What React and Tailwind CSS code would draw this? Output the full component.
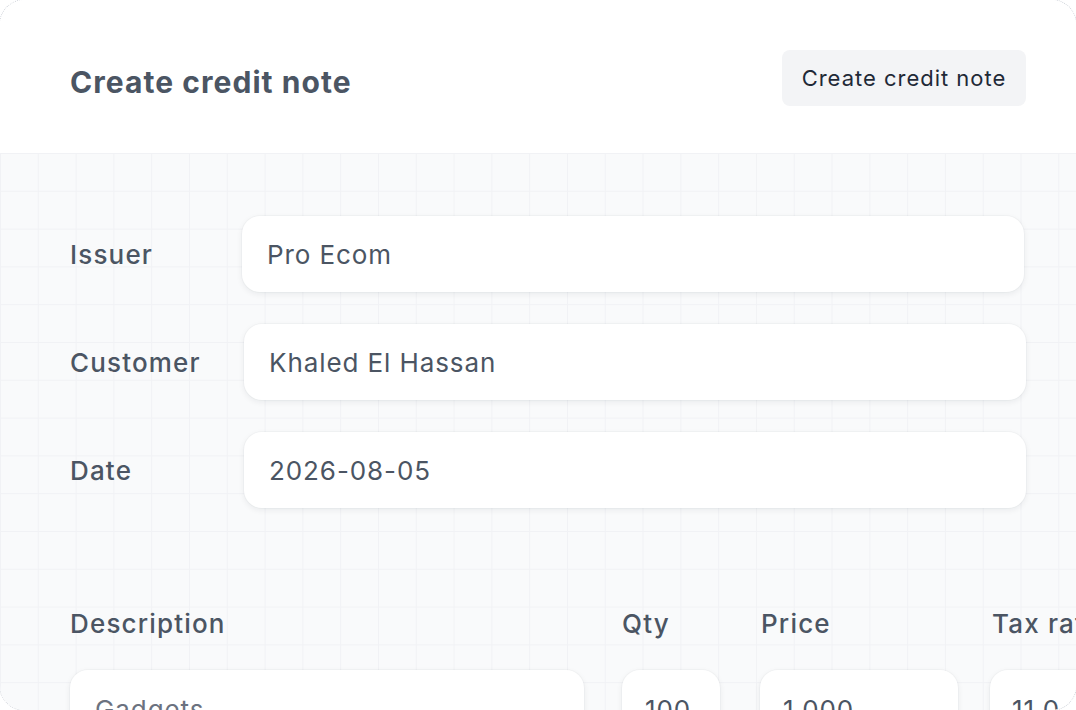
export default function App() {
  const inputCls =
    "shrink-0 bg-white rounded-[18px] h-[76px] flex items-center shadow-[0_2px_6px_rgba(15,23,42,0.07),0_0_0_1px_rgba(15,23,42,0.025)] text-[26px] text-[#4b5563] tracking-[0.035em]";
  const labelCls = "shrink-0 text-[26px] font-medium text-[#4b5563] tracking-[0.045em]";
  return (
    <div className="w-[1076px] h-[710px] overflow-hidden bg-white" style={{ fontFamily: "Inter, 'Noto Sans', sans-serif" }}>
      <div className="-ml-px -mt-px w-[1078px] h-[712px] rounded-[26px] border border-dotted border-[#d1d5db] overflow-hidden flex flex-col">
        <div className="h-[153px] shrink-0 bg-white flex items-center justify-between pl-[70px] pr-[50px]">
          <h1 className="text-[30px] font-bold text-[#4b5563] mt-[12px] tracking-[0.035em]">Create credit note</h1>
          <button className="h-[56px] w-[244px] rounded-[8px] bg-[#f3f4f6] text-[22px] text-[#1f2937] mt-[3px] tracking-[0.045em]">
            Create credit note
          </button>
        </div>
        <div className="flex-1 bg-[#f9fafb] bg-[linear-gradient(to_right,#f1f2f5_1px,transparent_1px),linear-gradient(to_bottom,#f1f2f5_1px,transparent_1px)] bg-[size:37.8px_37.8px] pt-[63px] pl-[70px]">
          <div className="flex flex-col gap-[32px]">
            <div className="flex items-center">
              <div className={labelCls + " w-[172px]"}>Issuer</div>
              <div className={inputCls + " w-[782px] pl-[25px]"}>Pro Ecom</div>
            </div>
            <div className="flex items-center">
              <div className={labelCls + " w-[174px]"}>Customer</div>
              <div className={inputCls + " w-[782px] pl-[25px]"}>Khaled El Hassan</div>
            </div>
            <div className="flex items-center">
              <div className={labelCls + " w-[174px]"}>Date</div>
              <div className={inputCls + " w-[782px] pl-[25px]"}>2026-08-05</div>
            </div>
          </div>
          <div className="mt-[100px] flex h-[30px] items-center">
            <div className={labelCls + " w-[552px]"}>Description</div>
            <div className={labelCls + " w-[139px]"}>Qty</div>
            <div className={labelCls + " w-[231px]"}>Price</div>
            <div className={labelCls + " whitespace-nowrap"}>Tax rate</div>
          </div>
          <div className="mt-[32px] flex">
            <div className={inputCls + " w-[514px] pl-[25px] items-start pt-[20px] !text-[#6b7280]"}>Gadgets</div>
            <div className={inputCls + " w-[98px] ml-[38px] pl-[23px] items-start pt-[20px]"}>100</div>
            <div className={inputCls + " w-[198px] ml-[40px] pl-[23px] items-start pt-[20px]"}>1,000</div>
            <div className={inputCls + " w-[200px] ml-[32px] pl-[22px] items-start pt-[20px]"}>11.0</div>
          </div>
        </div>
      </div>
    </div>
  );
}
